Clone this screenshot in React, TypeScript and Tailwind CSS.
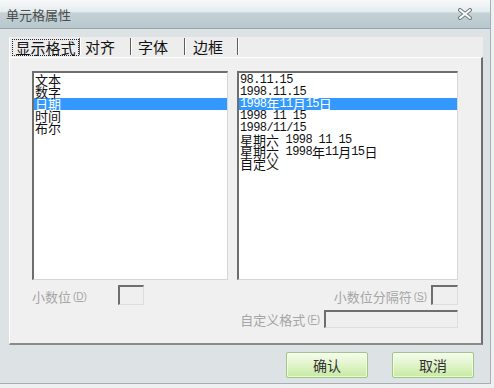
import React from "react";

const CJK = "font-['Noto_Sans_CJK_SC',sans-serif]";

function Mixed({ text }: { text: string }) {
  const parts = text.split(/([\u4e00-\u9fff]+)/).filter(Boolean);
  return (
    <>
      {parts.map((p, i) =>
        /[\u4e00-\u9fff]/.test(p) ? (
          <span key={i} className="font-['Noto_Sans_CJK_SC',sans-serif] text-[13px] leading-[12px]">
            {p}
          </span>
        ) : (
          <span
            key={i}
            className="font-['Liberation_Mono',monospace] text-[12px] leading-[12px] tracking-[-0.6px] whitespace-pre"
          >
            {p}
          </span>
        )
      )}
    </>
  );
}

function ListBox({
  items,
  selected,
  width,
}: {
  items: string[];
  selected: number;
  width: string;
}) {
  return (
    <div
      className={`${width} h-[209px] bg-white border-t-2 border-l-2 border-t-[#6e6e6e] border-l-[#6e6e6e] border-r border-b border-r-[#d6d6d6] border-b-[#d6d6d6] pt-[1px]`}
    >
      {items.map((it, i) => (
        <div
          key={i}
          className={`h-[12px] flex items-center pl-[1px] overflow-visible ${
            i === selected ? "bg-[#3399ff] text-white" : "text-[#111]"
          }`}
        >
          <Mixed text={it} />
        </div>
      ))}
    </div>
  );
}

function Label({ main, key2 }: { main: string; key2: string }) {
  return (
    <span className="flex items-center text-[#a5a5a5] whitespace-nowrap">
      <span className={`${CJK} text-[13px] leading-[14px]`}>{main}</span>
      <span className="font-['Liberation_Sans',sans-serif] text-[10px] leading-[14px] ml-[2px]">
        (<span className="underline">{key2}</span>)
      </span>
    </span>
  );
}

function InBox({ w, h }: { w: string; h: string }) {
  return (
    <div
      className={`${w} ${h} bg-[#efefef] border-t-2 border-l-2 border-t-[#6e6e6e] border-l-[#6e6e6e] border-r border-b border-r-[#dedede] border-b-[#dedede]`}
    />
  );
}

function Sep() {
  return <div className="w-[2px] h-[17px] mt-[1px] border-l border-l-[#5e5e5e] border-r border-r-white" />;
}

export default function App() {
  return (
    <div className="w-[494px] h-[388px] bg-[#eef0f1] overflow-hidden">
      <div className="w-[491px] h-[384px] bg-[#dde2e5] border-r border-b border-r-[#a6afb4] border-b-[#a6afb4] flex flex-col">
        {/* Title bar */}
        <div className="h-[29px] flex items-end justify-between bg-[linear-gradient(to_bottom,#f6f8f9_0%,#e5ecef_42%,#c4d1d6_46%,#b8c8ce_100%)] border-b border-b-[#94a5ab]">
          <span className={`${CJK} text-[13px] leading-[16px] text-[#4c4c4c] ml-[6px] mb-[5px]`}>单元格属性</span>
          <svg width="14" height="12" viewBox="0 0 14 12" className="mr-[18px] mb-[8px]">
            <path d="M2 2 L12 10 M12 2 L2 10" stroke="#6f7c82" strokeWidth="4" strokeLinecap="round" />
            <path d="M2 2 L12 10 M12 2 L2 10" stroke="#ffffff" strokeWidth="2" strokeLinecap="round" />
          </svg>
        </div>

        {/* Panel */}
        <div className="ml-[9px] mt-[8px] w-[474px] h-[308px] flex flex-col">
          <div className="h-[20px] bg-[#ededed] border-l border-l-white flex items-start text-[#111]">
            <div className="ml-[2px] mt-[2px] w-[67px] h-[17px] border border-dotted border-[#222] flex items-center justify-center">
              <span className={`${CJK} text-[15px] leading-[16px]`}>显示格式</span>
            </div>
            <Sep />
            <div className="w-[49px] h-[19px] pl-[4px] flex items-center">
              <span className={`${CJK} text-[15px] leading-[16px]`}>对齐</span>
            </div>
            <Sep />
            <div className="w-[52px] h-[19px] pl-[6px] flex items-center">
              <span className={`${CJK} text-[15px] leading-[16px]`}>字体</span>
            </div>
            <Sep />
            <div className="w-[51px] h-[19px] pl-[7px] flex items-center">
              <span className={`${CJK} text-[15px] leading-[16px]`}>边框</span>
            </div>
            <Sep />
          </div>

          <div className="flex-1 bg-[#f0f0f0] border-t border-l border-t-white border-l-white border-r-2 border-b-2 border-r-[#6f6f6f] border-b-[#8a8a8a] pl-[22px] pt-[13px]">
            <div className="flex gap-[9px]">
              <ListBox items={["文本", "数字", "日期", "时间", "布尔"]} selected={2} width="w-[196px]" />
              <ListBox
                items={[
                  "98.11.15",
                  "1998.11.15",
                  "1998年11月15日",
                  "1998 11 15",
                  "1998/11/15",
                  "星期六 1998 11 15",
                  "星期六 1998年11月15日",
                  "自定义",
                ]}
                selected={2}
                width="w-[221px]"
              />
            </div>

            <div className="w-[426px] mt-[5px] flex items-start justify-between">
              <div className="flex items-center">
                <div className="w-[86px] pt-[3px]">
                  <Label main="小数位" key2="D" />
                </div>
                <InBox w="w-[26px]" h="h-[20px]" />
              </div>
              <div className="flex items-center gap-[4px]">
                <div className="pt-[3px]">
                  <Label main="小数位分隔符" key2="S" />
                </div>
                <InBox w="w-[27px]" h="h-[20px]" />
              </div>
            </div>

            <div className="w-[426px] mt-[5px] flex items-center justify-end gap-[4px]">
              <div className="pt-[1px]">
                <Label main="自定义格式" key2="F" />
              </div>
              <InBox w="w-[134px]" h="h-[18px]" />
            </div>
          </div>
        </div>

        {/* Buttons */}
        <div className="mt-[7px] flex justify-end gap-[24px] pr-[16px]">
          {["确认", "取消"].map((t) => (
            <div
              key={t}
              className="w-[82px] h-[26px] border border-[#9fc97f] rounded-[2px] bg-[linear-gradient(to_bottom,#f6fcef_0%,#e2f5cc_45%,#c8e9a4_100%)] shadow-[inset_0_0_0_1px_rgba(255,255,255,0.6)] flex items-center justify-center"
            >
              <span className={`${CJK} text-[14px] leading-[16px] text-[#333]`}>{t}</span>
            </div>
          ))}
        </div>
      </div>
    </div>
  );
}
